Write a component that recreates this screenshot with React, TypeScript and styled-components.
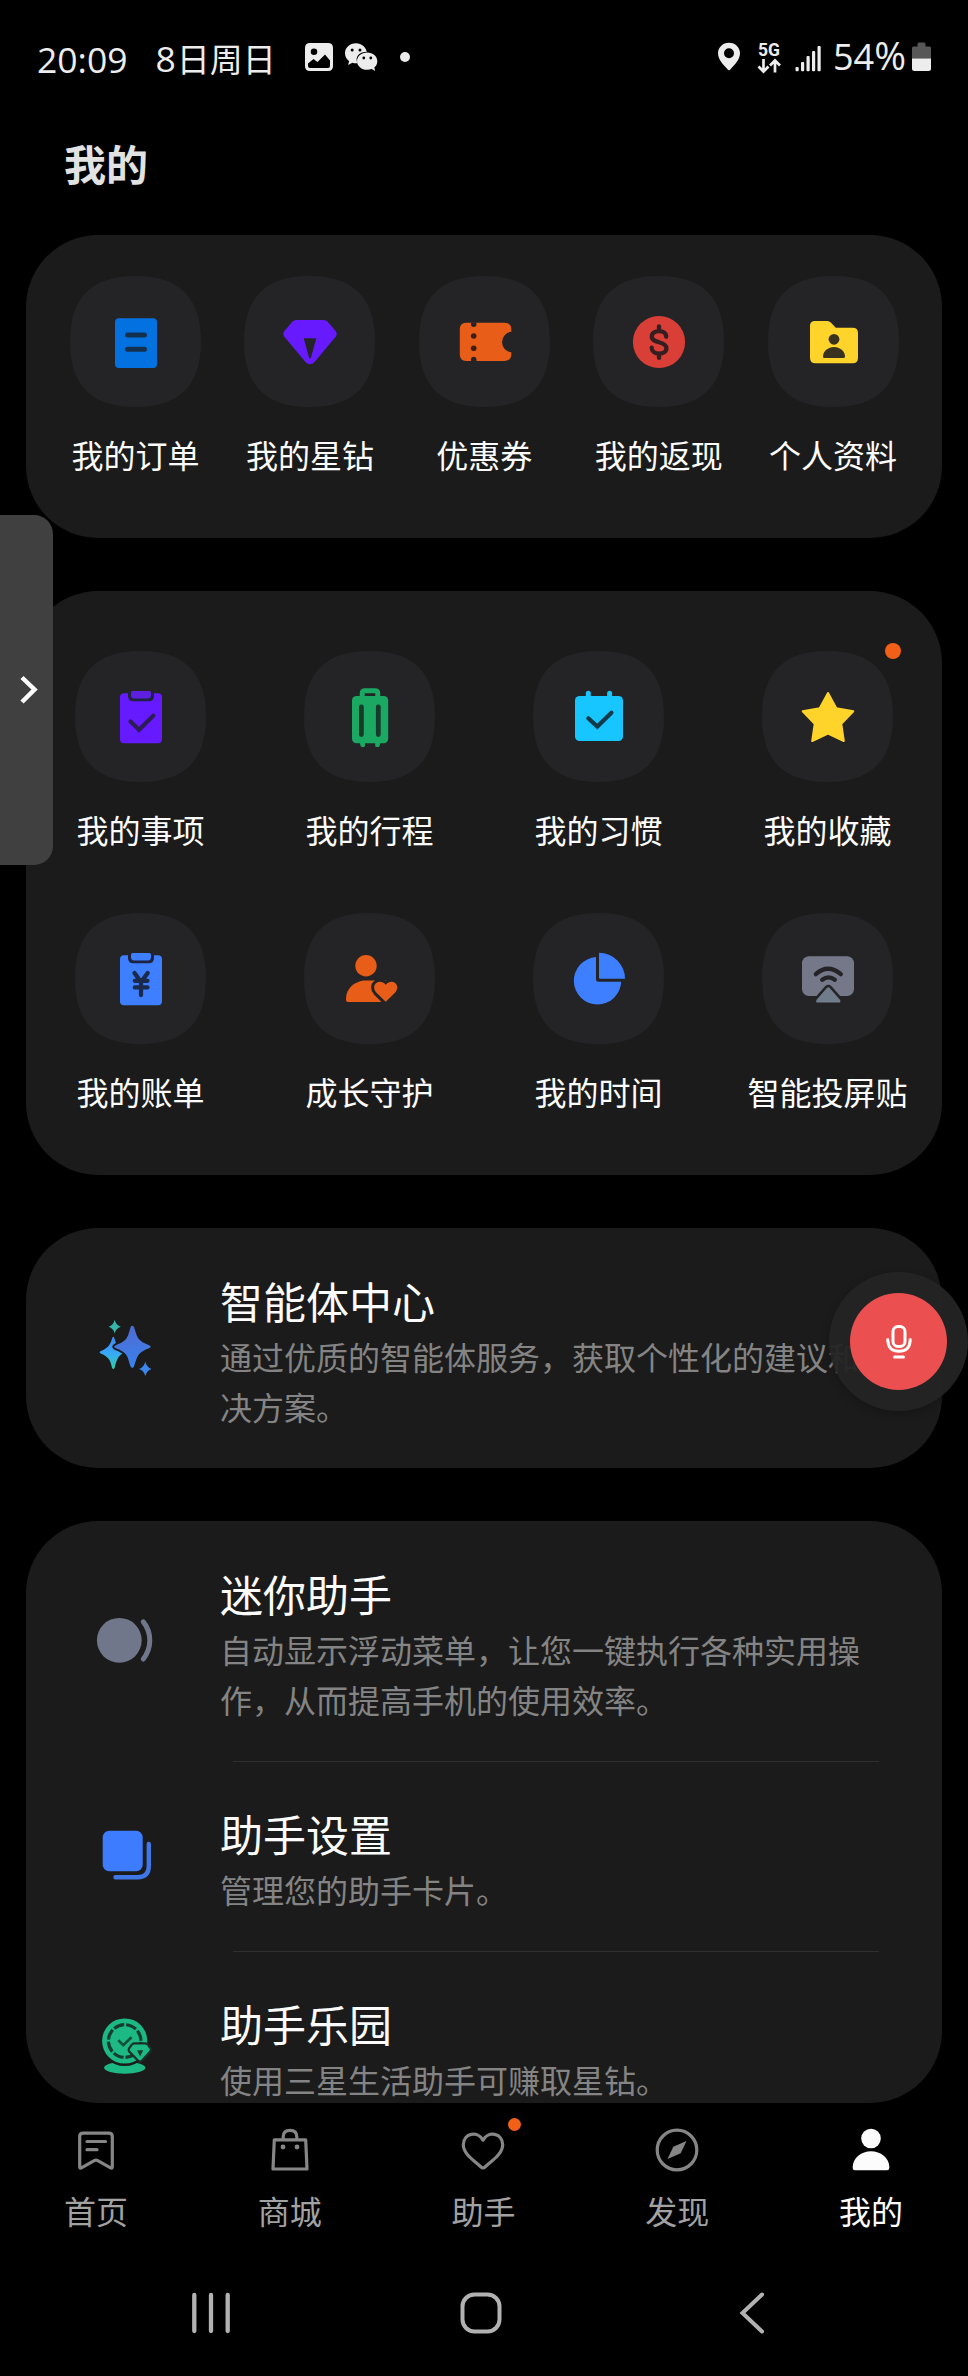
import React from "react";
import styled, { createGlobalStyle } from "styled-components";

const GlobalStyle = createGlobalStyle`
  * { box-sizing: border-box; }
  html, body { margin: 0; padding: 0; background: #000; }
  body { font-family: "Noto Sans CJK SC", sans-serif; }
`;

const tileColor = "#242426";

const Screen = styled.div`
  position: relative;
  width: 968px;
  height: 2376px;
  display: flex;
  flex-direction: column;
  background: #000;
  color: #fcfcfc;
  overflow: hidden;
`;

const StatusBar = styled.header`
  height: 114px;
  padding: 0 37px 0 37px;
  display: flex;
  justify-content: space-between;
  align-items: center;
  color: #ededed;
`;

const StatusSide = styled.div`
  display: flex;
  align-items: center;
  height: 44px;
`;

const Clock = styled.span`
  font: 400 35.5px/44px "Open Sans", sans-serif;
  width: 118.5px;
  margin-top: 3px;
  white-space: nowrap;
`;

const DateText = styled.span`
  font: 400 33px/44px "Noto Sans CJK SC", sans-serif;
  white-space: nowrap;
  width: 149.5px;
  margin-top: 2px;
`;

const DateDigit = styled.span`
  font: 400 35.5px/44px "Open Sans", sans-serif;
  margin-right: 1px;
`;

const Network = styled.div`
  display: flex;
  flex-direction: column;
  align-items: center;
  width: 24px;
  margin: 2px 14px 0 16px;
  font: 700 17.5px/15px Roboto, sans-serif;
`;

const Percent = styled.span`
  font: 400 36px/44px "Open Sans", sans-serif;
  margin: -3px 6px 0 12px;
  white-space: nowrap;
`;

const PercentSign = styled.span`
  font-size: 38.5px;
`;

const PageTitle = styled.h1`
  margin: 16px 0 39px 64px;
  height: 66px;
  font-size: 42px;
  line-height: 66px;
  font-weight: 700;
  color: #e2e2e2;
`;

const Cards = styled.main`
  flex: none;
  display: flex;
  flex-direction: column;
  gap: 53px;
  padding: 0 26px;
`;

const Card = styled.section<{ $height: number }>`
  height: ${(p) => p.$height}px;
  border-radius: 72px;
  background: #1b1b1b;
  overflow: hidden;
`;

const TileGrid = styled.div<{ $columns: number; $gap: number; $pad: string }>`
  display: grid;
  grid-template-columns: repeat(${(p) => p.$columns}, 131px);
  column-gap: ${(p) => p.$gap}px;
  row-gap: 61px;
  padding: ${(p) => p.$pad};
`;

const TileItem = styled.div`
  position: relative;
  display: flex;
  flex-direction: column;
  align-items: center;
  gap: 24px;
`;

const TileLabel = styled.span`
  font-size: 32px;
  line-height: 46px;
  white-space: nowrap;
`;

const Badge = styled.i<{ $size: number; $top: number; $right: number }>`
  position: absolute;
  top: ${(p) => p.$top}px;
  right: ${(p) => p.$right}px;
  width: ${(p) => p.$size}px;
  height: ${(p) => p.$size}px;
  border-radius: 50%;
  background: #f26018;
`;

const ListRow = styled.div`
  display: flex;
  align-items: center;
  gap: 63px;
  padding: 0 0 0 67px;
`;

const ListText = styled.div`
  padding: 41px 0 37px;
`;

const ListTitle = styled.h2`
  margin: 0;
  font-size: 43px;
  line-height: 62px;
  font-weight: 400;
  white-space: nowrap;
`;

const ListDesc = styled.p`
  margin: 0;
  font-size: 32px;
  line-height: 50px;
  color: #848484;
  white-space: pre;
`;

const Divider = styled.hr`
  height: 1px;
  margin: 0 63px -1px 207px;
  border: 0;
  background: #303030;
`;

const TabBar = styled.nav`
  height: 145px;
  display: grid;
  grid-template-columns: repeat(5, 1fr);
  padding-top: 20px;
  margin-left: -1px;
`;

const Tab = styled.div<{ $active?: boolean }>`
  position: relative;
  display: flex;
  flex-direction: column;
  align-items: center;
  gap: 8px;
  font-size: 32px;
  line-height: 50px;
  color: ${(p) => (p.$active ? "#fcfcfc" : "#a2a2a2")};
`;

const SystemBar = styled.footer`
  display: flex;
  align-items: center;
  justify-content: space-between;
  height: 128px;
  padding: 2px 192px 0 183px;
`;

const HomeKey = styled.svg`
  margin-right: 5px;
`;

const EdgeHandle = styled.div`
  position: absolute;
  left: 0;
  top: 515px;
  width: 53px;
  height: 350px;
  border-radius: 0 19px 19px 0;
  background: #404040;
  display: flex;
  align-items: center;
  padding-left: 18px;
`;

const VoiceHalo = styled.div`
  position: absolute;
  left: 829px;
  top: 1272px;
  width: 139px;
  height: 139px;
  border-radius: 50%;
  background: rgba(36, 36, 36, 0.95);
  box-shadow: 0 3px 10px rgba(0, 0, 0, 0.22);
  display: flex;
  align-items: center;
  justify-content: center;
`;

const VoiceButton = styled.div`
  width: 97px;
  height: 97px;
  border-radius: 50%;
  background: #ec4f4f;
  display: flex;
  align-items: center;
  justify-content: center;
`;

const TileArt = ({ children }: { children: React.ReactNode }) => (
  <svg width="131" height="131" viewBox="0 0 131 131" fill="none">
    <path
      d="M65.5 0C109.5 0 131 21.5 131 65.5C131 109.5 109.5 131 65.5 131C21.5 131 0 109.5 0 65.5C0 21.5 21.5 0 65.5 0Z"
      fill={tileColor}
    />
    {children}
  </svg>
);

const OrderArt = () => (
  <>
    <rect x="45" y="42.3" width="42" height="49.7" rx="4" fill="#0372e0" />
    <path d="M57.5 59H74.5M57.5 73.2H74.5" stroke="#13304f" strokeWidth="5" strokeLinecap="round" />
  </>
);

const GemArt = () => (
  <>
    <path
      d="M52.5 44H79.5Q82 44 83.7 45.8L92 55.5Q93.6 58 92 60.3L70.5 86Q66 90.4 61.5 86L40 60.3Q38.4 58 40 55.5L48.3 45.8Q50 44 52.5 44Z"
      fill="#681aff"
    />
    <path d="M59.7 62.3H72.3L67 81.5Q66 83.4 65 81.5Z" fill={tileColor} />
  </>
);

const TicketArt = () => (
  <>
    <path
      d="M47 46.7H85.5Q92.3 47 92.3 53V55.8A10.3 10.3 0 0 0 92.3 76.3V78.5Q92.3 84.7 85.5 85H47Q40.8 84.7 40.8 78.5V53Q40.8 47 47 46.7Z"
      fill="#e85d17"
    />
    <g fill="#3d1f12">
      <path d="M52 46.5H57.4V48.2A2.7 2.7 0 0 1 52 48.2Z" fill={tileColor} />
      <circle cx="54.7" cy="60" r="2.8" />
      <circle cx="54.7" cy="72.3" r="2.8" />
      <path d="M52 85.2H57.4V83.5A2.7 2.7 0 0 0 52 83.5Z" fill={tileColor} />
    </g>
  </>
);

const DollarArt = () => (
  <>
    <circle cx="66" cy="66" r="26.1" fill="#d93f36" />
    <path
      d="M73.2 60.8C73.2 57 70 55.2 66 55.2C62 55.2 58.8 57 58.8 60.5C58.8 64.2 62.5 65.2 66 66.2C69.8 67.2 73.4 68.4 73.4 72.2C73.4 75.6 70 77.6 66 77.6C62 77.6 58.7 75.4 58.7 71.7M66 50.3V55M66 78V81.9"
      stroke="#351e20"
      strokeWidth="4.3"
      strokeLinecap="round"
    />
  </>
);

const FolderArt = () => (
  <>
    <path
      d="M47 45H59.5Q61.3 45 62.8 46.6L67.8 51.7H84.5Q90 51.7 90 57V81.8Q90 87.3 84.5 87.3H47.5Q42 87.3 42 81.8V50Q42 45 47 45Z"
      fill="#ffd42a"
    />
    <circle cx="66" cy="63.3" r="5.4" fill="#38321f" />
    <path d="M66 71C72 71 77 75.5 77 80.4Q77 82 75.4 82H56.6Q55 82 55 80.4C55 75.5 60 71 66 71Z" fill="#38321f" />
  </>
);

const Clipboard = ({ color, clip, children }: { color: string; clip?: string; children: React.ReactNode }) => (
  <>
    <rect x="45" y="42.3" width="42" height="50" rx="4" fill={color} />
    <path d="M53 41V45Q53 50.3 58.3 50.3H73.7Q79 50.3 79 45V41Z" fill="#1d2340" />
    <path d="M57.5 40H74.5Q76 40 76 41.5V44.3Q76 47.4 73 47.4H59Q56 47.4 56 44.3V41.5Q56 40 57.5 40Z" fill={clip || color} />
    {children}
  </>
);

const TodoArt = () => (
  <Clipboard color="#661aff" clip="#5d20e0">
    <path d="M55.5 70.5L64 78.7L78.3 64.7" stroke="#2d1c58" strokeWidth="4.2" strokeLinecap="round" />
  </Clipboard>
);

const BillArt = () => (
  <Clipboard color="#3d7fff">
    <path
      d="M59.5 60L66 69L72.7 60M59.8 67.8H72.5M59.8 74.4H72.5M66 69V82"
      stroke="#1b294d"
      strokeWidth="4.3"
      strokeLinecap="round"
      strokeLinejoin="round"
    />
  </Clipboard>
);

const LuggageArt = () => (
  <>
    <path d="M58.2 47V42.5Q58.2 39.7 61 39.7H71Q73.8 39.7 73.8 42.5V47" stroke="#1aa863" strokeWidth="5" />
    <rect x="48" y="45" width="36.2" height="47.2" rx="4.5" fill="#1aa863" />
    <path d="M55.5 91H61V94.5Q61 96 59.5 96H58Q57 96 56.5 94.5ZM71.2 91H76.7L75.7 94.5Q75.2 96 74.2 96H72.7Q71.2 96 71.2 94.5Z" fill="#1aa863" />
    <path d="M57.4 55.8V83.5M74.3 55.8V83.5" stroke="#173a2b" strokeWidth="4.8" strokeLinecap="round" />
  </>
);

const CalendarArt = () => (
  <>
    <path d="M55.3 42.3V48M76.6 42.3V48" stroke="#17c5ff" strokeWidth="5" strokeLinecap="round" />
    <rect x="42" y="45" width="48" height="45" rx="4.5" fill="#17c5ff" />
    <path d="M55.3 67.3L64.3 75.6L78.4 61.8" stroke="#10394a" strokeWidth="4.2" strokeLinecap="round" />
  </>
);

const StarArt = () => (
  <path
    d="M66 42L74.3 57.2L91.3 60.2L79.3 72.9L81.8 90L66 82.7L50.2 90L52.7 72.9L40.7 60.2L57.7 57.2Z"
    fill="#ffd42a"
    stroke="#ffd42a"
    strokeWidth="2"
    strokeLinejoin="round"
  />
);

const heartPath = "M81.7 88.8L72.5 79.8C65.5 72 75.5 64.5 81.7 71.8C88 64.5 97.8 72 91 79.8Z";

const GuardianArt = () => (
  <>
    <circle cx="62" cy="52.7" r="10.7" fill="#e85d17" />
    <path d="M62 67.6C51 67.6 42 75.5 42 86V87Q42 89 44 89H77L82 67.6Z" fill="#e85d17" />
    <path d={heartPath} stroke={tileColor} strokeWidth="6" strokeLinejoin="round" />
    <path d="M77 89.1H92V95H77Z" fill={tileColor} />
    <path d={heartPath} fill="#e85d17" />
  </>
);

const PieArt = () => (
  <g fill="#3d7fff">
    <path d="M63 44.1V66.5Q63 68.7 65.2 68.7H88.2A23.7 23.7 0 1 1 63 44.1Z" />
    <path d="M66 39.8A26 26 0 0 1 92 65.8H67.3Q66 65.8 66 64.5Z" />
  </g>
);

const CastArt = () => (
  <>
    <rect x="40" y="43.3" width="52" height="39.7" rx="7" fill="#747889" />
    <path d="M53.8 61.2Q66 50.5 78.8 61.2M60.2 66.8Q66.5 62 72.8 66.8" stroke={tileColor} strokeWidth="4.3" strokeLinecap="round" />
    <path
      d="M64.9 74.9Q66.3 73.5 67.7 74.9L78 86.7Q79.3 89.5 77 89.5H55.6Q53.3 89.5 54.6 86.7Z"
      fill="#707b8c"
      stroke={tileColor}
      strokeWidth="5"
      paintOrder="stroke"
    />
  </>
);

const quickTiles = [
  { label: "我的订单", Art: OrderArt },
  { label: "我的星钻", Art: GemArt },
  { label: "优惠券", Art: TicketArt },
  { label: "我的返现", Art: DollarArt },
  { label: "个人资料", Art: FolderArt },
];

const serviceTiles = [
  { label: "我的事项", Art: TodoArt },
  { label: "我的行程", Art: LuggageArt },
  { label: "我的习惯", Art: CalendarArt },
  { label: "我的收藏", Art: StarArt, badge: true },
  { label: "我的账单", Art: BillArt },
  { label: "成长守护", Art: GuardianArt },
  { label: "我的时间", Art: PieArt },
  { label: "智能投屏贴", Art: CastArt },
];

const ListIcon = ({ children }: { children: React.ReactNode }) => (
  <svg width="64" height="64" viewBox="0 0 64 64" fill="none">
    {children}
  </svg>
);

const SparkleIcon = () => (
  <ListIcon>
    <defs>
      <linearGradient id="spark-big" x1="0" y1="0" x2="0" y2="1">
        <stop offset="0" stopColor="#4f6bd0" />
        <stop offset="1" stopColor="#3a82ee" />
      </linearGradient>
      <linearGradient id="spark-left" x1="0" y1="0" x2="0" y2="1">
        <stop offset="0" stopColor="#3f86f5" />
        <stop offset="0.5" stopColor="#38a8f8" />
        <stop offset="1" stopColor="#2ecfa6" />
      </linearGradient>
    </defs>
    <path d="M21.7 3.7Q23 9.4 27.8 10.7Q23 12 21.7 17.6Q20.4 12 15.6 10.7Q20.4 9.4 21.7 3.7Z" fill="#34b7a8" />
    <path
      d="M19.2 22.2Q20.3 19.5 21.4 22.2C23 28 25 31.8 29.5 35.2Q31.5 36.5 29.5 37.5C24.5 40.5 23.5 45 21.6 51.7Q20.3 54.5 19 51.7C17.5 45 16 41 7.8 37.6Q5.5 36.3 7.8 35C15.5 32 17.5 28 19.2 22.2Z"
      fill="url(#spark-left)"
    />
    <path
      d="M37.6 11Q39.3 8.4 41 11C44.5 22 44.5 24.5 56 29.2Q59.4 30.7 56 32.2C44.5 36.5 44.5 40 41 50.6Q39.3 53.2 37.6 50.6C34.5 40 34.5 36.5 22.8 32.2Q19.6 30.7 22.8 29.2C34.5 24.5 34.5 22 37.6 11Z"
      fill="url(#spark-big)"
      stroke="#1b1b1b"
      strokeWidth="4"
      paintOrder="stroke"
    />
    <path d="M52.3 45.8Q53.7 51.6 58.6 53Q53.7 54.4 52.3 60Q50.9 54.4 46 53Q50.9 51.6 52.3 45.8Z" fill="#3a86ee" />
  </ListIcon>
);

const MiniIcon = () => (
  <ListIcon>
    <circle cx="26.3" cy="31.3" r="22.4" fill="#70778a" />
    <path d="M50.3 12.8Q56.8 20.8 56.8 31.3Q56.8 41.8 50.3 50" stroke="#70778a" strokeWidth="5" strokeLinecap="round" />
  </ListIcon>
);

const SettingsIcon = () => (
  <ListIcon>
    <rect x="9.7" y="6.8" width="40" height="40.4" rx="6.5" fill="#3d7cff" />
    <path d="M55.8 20V42Q55.8 53.2 44.6 53.2H22.5" stroke="#3f78e6" strokeWidth="4.4" strokeLinecap="round" />
  </ListIcon>
);

const ParkIcon = () => (
  <ListIcon>
    <ellipse cx="31.7" cy="53.8" rx="20.6" ry="6" fill="#1cb985" />
    <circle cx="31.7" cy="27" r="22.6" fill="#1cb985" stroke="#1b1b1b" strokeWidth="5" paintOrder="stroke" />
    <circle
      cx="31.7"
      cy="27"
      r="16.3"
      stroke="#143d2d"
      strokeWidth="3.2"
      strokeDasharray="10.8 2"
      strokeDashoffset="-1"
    />
    <path d="M25.3 26.3L30.3 31.2L38.5 23.2" stroke="#145139" strokeWidth="2.6" />
    <path
      d="M41.5 30.5H52Q53 30.5 53.8 31.2L56.6 35Q57 36 56.4 36.8L48.3 45.8Q47 47 45.7 45.8L37 36.8Q36.4 36 37 35L39.8 31.2Q40.5 30.5 41.5 30.5Z"
      fill="#1cb985"
      stroke="#1b2f27"
      strokeWidth="4.4"
      paintOrder="stroke"
    />
    <path d="M44 36.2H50.2L47.1 42.5Z" fill="#143d2d" />
  </ListIcon>
);

const assistRows = [
  {
    title: "迷你助手",
    desc: "自动显示浮动菜单，让您一键执行各种实用操\n作，从而提高手机的使用效率。",
    Icon: MiniIcon,
  },
  { title: "助手设置", desc: "管理您的助手卡片。", Icon: SettingsIcon },
  { title: "助手乐园", desc: "使用三星生活助手可赚取星钻。", Icon: ParkIcon },
];

const TabIcon = ({ children }: { children: React.ReactNode }) => (
  <svg width="54" height="54" viewBox="0 0 54 54" fill="none" stroke="#868686" strokeWidth="3.2" strokeLinejoin="round">
    {children}
  </svg>
);

const tabs = [
  {
    label: "首页",
    icon: (
      <TabIcon>
        <path d="M14 10.2H40Q43.3 10.2 43.3 13.5V44Q43.3 45.6 41.6 44.8L28.8 37.6Q27 36.7 25.2 37.6L12.4 44.8Q10.7 45.6 10.7 44V13.5Q10.7 10.2 14 10.2Z" />
        <path d="M18 18.5H36.5M18 26.7H28" strokeLinecap="round" />
      </TabIcon>
    ),
  },
  {
    label: "商城",
    icon: (
      <TabIcon>
        <path d="M11.3 16.8H42.7L44 46H10ZM20.2 16V13.8Q20.2 7.3 27 7.3Q33.8 7.3 33.8 13.8V16" />
        <circle cx="20" cy="24" r="2.4" fill="#868686" stroke="none" />
        <circle cx="34" cy="24" r="2.4" fill="#868686" stroke="none" />
      </TabIcon>
    ),
  },
  {
    label: "助手",
    badge: true,
    icon: (
      <TabIcon>
        <path d="M27 17.2C22 7.5 7.3 9.8 7.3 21.8C7.3 31.5 19.5 38.5 25 44Q27 45.7 29 44C34.5 38.5 46.7 31.5 46.7 21.8C46.7 9.8 32 7.5 27 17.2Z" />
      </TabIcon>
    ),
  },
  {
    label: "发现",
    icon: (
      <TabIcon>
        <circle cx="27" cy="27" r="19.8" />
        <path d="M36.5 18L30.7 30.2L17.5 36L23.3 23.8Z" fill="#868686" stroke="none" />
      </TabIcon>
    ),
  },
  {
    label: "我的",
    active: true,
    icon: (
      <TabIcon>
        <circle cx="27" cy="15.5" r="9.8" fill="#fcfcfc" stroke="none" />
        <path d="M27 28.3C36.5 28.3 45.3 35 45.3 44V45Q45.3 47.3 43 47.3H11Q8.7 47.3 8.7 45V44C8.7 35 17.5 28.3 27 28.3Z" fill="#fcfcfc" stroke="none" />
      </TabIcon>
    ),
  },
];

const NoticeIcons = () => (
  <svg width="108" height="34" viewBox="0 0 108 34" fill="#ededed">
    <path
      fillRule="evenodd"
      d="M5 3H23Q28 3 28 8V26Q28 31 23 31H5Q0 31 0 26V8Q0 3 5 3ZM9 8.5A3.2 3.2 0 1 0 9 15A3.2 3.2 0 1 0 9 8.5ZM3 23.5L8.5 19L12.5 22L20 14.5L25 20.5V26Q25 28 23 28H5Q3 28 3 26Z"
    />
    <path d="M51 3.3C44.5 3.3 40 7.8 40 13.3C40 16.6 41.5 19.3 44.2 21.2L43 25L47.4 22.8Q49.5 23.5 52.4 23.3C49.5 16 55 11.8 61.8 11.8C60.8 7 56.5 3.3 51 3.3Z" />
    <path d="M62.2 12.5C56.5 12.5 52 16.4 52 21.2C52 26 56.5 29.8 62.2 29.8Q64.7 29.8 66.7 29L70.2 31L69.3 27.4C71.3 25.8 72.3 23.8 72.3 21.2C72.3 16.4 67.9 12.5 62.2 12.5Z" />
    <g fill="#000">
      <circle cx="47.2" cy="10" r="1.5" />
      <circle cx="55" cy="10" r="1.5" />
      <circle cx="58.8" cy="18" r="1.4" />
      <circle cx="65.8" cy="18" r="1.4" />
    </g>
    <circle cx="100" cy="17" r="5" />
  </svg>
);

export default function App() {
  return (
    <>
      <GlobalStyle />
      <Screen>
        <StatusBar>
          <StatusSide>
            <Clock>20:09</Clock>
            <DateText>
              <DateDigit>8</DateDigit>日周日
            </DateText>
            <NoticeIcons />
          </StatusSide>
          <StatusSide>
            <svg width="24" height="34" viewBox="0 0 24 34" fill="#ededed">
              <path
                fillRule="evenodd"
                d="M12 2.7C5.5 2.7 1 7.5 1 13.3C1 19.5 6.5 25 10.5 29.3Q12 31 13.5 29.3C17.5 25 23 19.5 23 13.3C23 7.5 18.5 2.7 12 2.7ZM12 8.3A5 5 0 1 1 12 18.3A5 5 0 1 1 12 8.3Z"
              />
            </svg>
            <Network>
              5G
              <svg width="24" height="16" viewBox="0 0 24 16" fill="none" stroke="#ededed" strokeWidth="2.7">
                <path d="M6.5 1V13M1.5 8.5L6.5 13.5L11.5 8.5M18 14.5V2.5M13 7.5L18 2.5L23 7.5" />
              </svg>
            </Network>
            <svg width="26" height="34" viewBox="0 0 26 34" fill="#ededed">
              <rect x="0.5" y="27" width="3.2" height="4.2" rx="1" />
              <rect x="6" y="22" width="3.2" height="9.2" rx="1" />
              <rect x="11.5" y="16" width="3.2" height="15.2" rx="1" />
              <rect x="17" y="11" width="3.2" height="20.2" rx="1" />
              <rect x="22.5" y="6" width="3.2" height="25.2" rx="1" />
            </svg>
            <Percent>
              54<PercentSign>%</PercentSign>
            </Percent>
            <svg width="19" height="34" viewBox="0 0 19 34">
              <path d="M5.5 6.5V4Q5.5 2.5 7 2.5H12Q13.5 2.5 13.5 4V6.5H17.5Q19 6.5 19 8V18.7H0V8Q0 6.5 1.5 6.5Z" fill="#575757" />
              <path d="M0 18.5H19V28.5Q19 31 16.5 31H2.5Q0 31 0 28.5Z" fill="#ededed" />
            </svg>
          </StatusSide>
        </StatusBar>

        <PageTitle>我的</PageTitle>

        <Cards>
          <Card $height={303}>
            <TileGrid $columns={5} $gap={43.4} $pad="41px 0 0 44px">
              {quickTiles.map(({ label, Art }) => (
                <TileItem key={label}>
                  <TileArt>
                    <Art />
                  </TileArt>
                  <TileLabel>{label}</TileLabel>
                </TileItem>
              ))}
            </TileGrid>
          </Card>

          <Card $height={584}>
            <TileGrid $columns={4} $gap={98} $pad="60px 0 0 49px">
              {serviceTiles.map(({ label, Art, badge }) => (
                <TileItem key={label}>
                  <TileArt>
                    <Art />
                  </TileArt>
                  {badge && <Badge $size={16} $top={-8} $right={-8} />}
                  <TileLabel>{label}</TileLabel>
                </TileItem>
              ))}
            </TileGrid>
          </Card>

          <Card $height={240}>
            <ListRow>
              <SparkleIcon />
              <ListText>
                <ListTitle>智能体中心</ListTitle>
                <ListDesc>{"通过优质的智能体服务，获取个性化的建议和解\n决方案。"}</ListDesc>
              </ListText>
            </ListRow>
          </Card>

          <Card $height={582}>
            {assistRows.map(({ title, desc, Icon }, index) => (
              <React.Fragment key={title}>
                {index > 0 && <Divider />}
                <ListRow>
                  <Icon />
                  <ListText>
                    <ListTitle>{title}</ListTitle>
                    <ListDesc>{desc}</ListDesc>
                  </ListText>
                </ListRow>
              </React.Fragment>
            ))}
          </Card>
        </Cards>

        <TabBar>
          {tabs.map(({ label, icon, active, badge }) => (
            <Tab key={label} $active={active}>
              {icon}
              {badge && <Badge $size={13} $top={-5} $right={59} />}
              <span>{label}</span>
            </Tab>
          ))}
        </TabBar>

        <SystemBar>
          <svg width="56" height="48" viewBox="0 0 56 48" stroke="#b2b2b2" strokeWidth="4.3" strokeLinecap="round">
            <path d="M11.3 6V42M28 6V42M44.7 6V42" />
          </svg>
          <HomeKey width="48" height="48" viewBox="0 0 48 48" fill="none" stroke="#b2b2b2" strokeWidth="4">
            <rect x="5.5" y="5.5" width="37" height="37" rx="12" />
          </HomeKey>
          <svg width="48" height="48" viewBox="0 0 48 48" fill="none" stroke="#b2b2b2" strokeWidth="4" strokeLinecap="round">
            <path d="M34 5.5L14.5 24L34 42.5" />
          </svg>
        </SystemBar>

        <EdgeHandle>
          <svg width="22" height="34" viewBox="0 0 22 34" fill="none" stroke="#fcfcfc" strokeWidth="4.5">
            <path d="M4 4.5L16.5 16.5L4 29" />
          </svg>
        </EdgeHandle>

        <VoiceHalo>
          <VoiceButton>
            <svg width="36" height="44" viewBox="0 0 36 44" fill="none" stroke="#fff" strokeWidth="3" strokeLinecap="round">
              <rect x="12" y="6.5" width="12" height="20" rx="5" />
              <path d="M6.8 19.5V20.5Q7.5 31.3 18 31.3Q28.5 31.3 29.2 20.5V19.5" />
              <path d="M13.5 37H22.5" />
            </svg>
          </VoiceButton>
        </VoiceHalo>
      </Screen>
    </>
  );
}
